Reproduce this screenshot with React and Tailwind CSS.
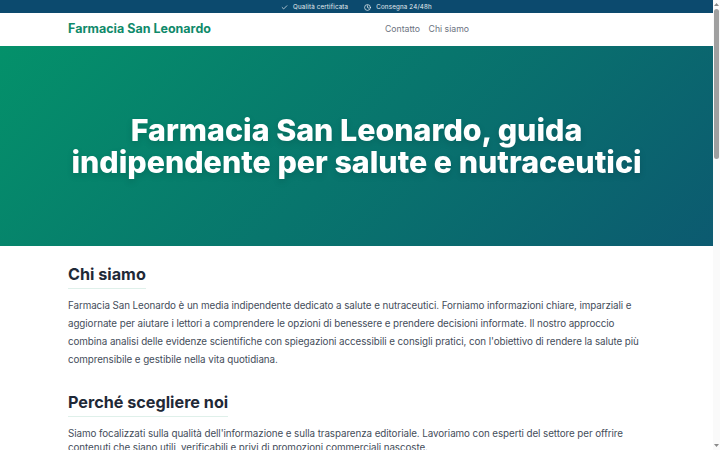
export default function App() {
  return (
    <div className="flex h-[450px] overflow-hidden bg-white font-['Inter','Liberation_Sans',sans-serif]">
      <div className="w-[713px] shrink-0">
        <div className="flex h-[13px] items-center justify-center gap-4 bg-[#0c4a6e] pt-px text-[6.2px] leading-none tracking-[0.03em] text-white/90">
          <span className="flex items-center gap-[5px]">
            <svg width="7" height="7" viewBox="0 0 24 24" fill="none" stroke="currentColor" strokeWidth="2.5" strokeLinecap="round" strokeLinejoin="round"><path d="M20 6 9 17l-5-5" /></svg>
            Qualità certificata
          </span>
          <span className="flex items-center gap-[5px]">
            <svg width="7" height="7" viewBox="0 0 24 24" fill="none" stroke="currentColor" strokeWidth="2.5" strokeLinecap="round" strokeLinejoin="round"><circle cx="12" cy="12" r="10" /><path d="M12 6v6l4 2" /></svg>
            Consegna 24/48h
          </span>
        </div>
        <header className="flex h-[33px] items-center bg-white px-[68px]">
          <span className="w-[317px] text-[12.5px] font-bold text-[#0f8a6a]">Farmacia San Leonardo</span>
          <nav className="flex gap-[8.5px] text-[8.7px] text-[#6b7280]">
            <span>Contatto</span>
            <span>Chi siamo</span>
          </nav>
        </header>
        <section className="flex h-[200px] items-center justify-center bg-[linear-gradient(135deg,#04916a,#0c5a70)] px-[60px]">
          <h1 className="text-center text-[30.4px] leading-[32px] font-extrabold text-white drop-shadow-md">
            Farmacia San Leonardo, guida indipendente per salute e nutraceutici
          </h1>
        </section>
        <main className="px-[68px] pt-[17px]">
          <h2 className="w-fit border-b border-[#dff0ea] pb-[3px] text-[16.2px] leading-[22px] font-bold text-[#1f2937]">Chi siamo</h2>
          <p className="mt-[8px] text-[9.8px] leading-[17.9px] tracking-[-0.07px] text-[#444d5a]">
            Farmacia San Leonardo è un media indipendente dedicato a salute e nutraceutici. Forniamo informazioni chiare, imparziali e aggiornate per aiutare i lettori a comprendere le opzioni di benessere e prendere decisioni informate. Il nostro approccio combina analisi delle evidenze scientifiche con spiegazioni accessibili e consigli pratici, con l'obiettivo di rendere la salute più comprensibile e gestibile nella vita quotidiana.
          </p>
          <h2 className="mt-[22px] w-fit border-b border-[#dff0ea] pb-[3px] text-[16.2px] leading-[22px] font-bold text-[#1f2937]">Perché scegliere noi</h2>
          <p className="mt-[10px] text-[9.8px] leading-[14.4px] tracking-[-0.07px] text-[#444d5a]">
            Siamo focalizzati sulla qualità dell'informazione e sulla trasparenza editoriale. Lavoriamo con esperti del settore per offrire contenuti che siano utili, verificabili e privi di promozioni commerciali nascoste.
          </p>
        </main>
      </div>
      <div className="flex w-[7px] shrink-0 flex-col items-center justify-between bg-[#fafafa] py-[3px] text-[#8a8a8a]">
        <svg width="5" height="3" viewBox="0 0 5 3" fill="currentColor"><path d="M2.5 0 5 3H0z" /></svg>
        <div className="mt-[3px] mb-auto h-[150px] w-[4.5px] rounded-full bg-[#a0a0a0]" />
        <svg width="5" height="3" viewBox="0 0 5 3" fill="currentColor"><path d="M2.5 3 5 0H0z" /></svg>
      </div>
    </div>
  );
}
